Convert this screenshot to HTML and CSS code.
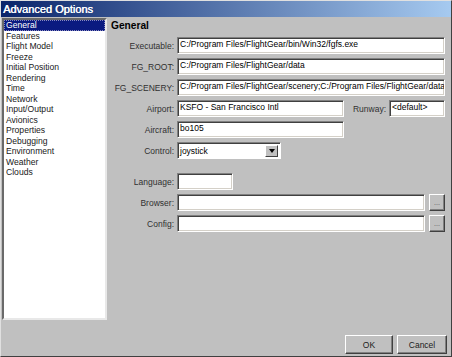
FILE: index.html
```html
<!DOCTYPE html>
<html lang="en">
<head>
    <meta charset="UTF-8">
    <title>Advanced Options</title>
    <link rel="stylesheet" href="styles.css">
</head>
<body>
    <div class="window">
        <div class="titlebar">Advanced Options</div>

        <div class="main">
            <!-- category list -->
            <ul class="pages">
                <li class="selected">General</li>
                <li>Features</li>
                <li>Flight Model</li>
                <li>Freeze</li>
                <li>Initial Position</li>
                <li>Rendering</li>
                <li>Time</li>
                <li>Network</li>
                <li>Input/Output</li>
                <li>Avionics</li>
                <li>Properties</li>
                <li>Debugging</li>
                <li>Environment</li>
                <li>Weather</li>
                <li>Clouds</li>
            </ul>

            <!-- General page -->
            <div class="panel">
                <h1>General</h1>
                <div class="form">
                    <div class="row">
                        <span class="label">Executable:</span>
                        <span class="field wide">C:/Program Files/FlightGear/bin/Win32/fgfs.exe</span>
                    </div>
                    <div class="row">
                        <span class="label">FG_ROOT:</span>
                        <span class="field wide">C:/Program Files/FlightGear/data</span>
                    </div>
                    <div class="row">
                        <span class="label">FG_SCENERY:</span>
                        <span class="field wide">C:/Program Files/FlightGear/scenery;C:/Program Files/FlightGear/data</span>
                    </div>
                    <div class="row">
                        <span class="label">Airport:</span>
                        <span class="field medium">KSFO - San Francisco Intl</span>
                        <span class="label runway">Runway:</span>
                        <span class="field small">&lt;default&gt;</span>
                    </div>
                    <div class="row">
                        <span class="label">Aircraft:</span>
                        <span class="field medium">bo105</span>
                    </div>
                    <div class="row">
                        <span class="label">Control:</span>
                        <span class="combo">
                            <span class="combo-text">joystick</span>
                            <span class="combo-btn"><span class="arrow"></span></span>
                        </span>
                    </div>

                    <div class="row spaced">
                        <span class="label">Language:</span>
                        <span class="field tiny"></span>
                    </div>
                    <div class="row">
                        <span class="label">Browser:</span>
                        <span class="field wide"></span>
                        <span class="button browse">...</span>
                    </div>
                    <div class="row">
                        <span class="label">Config:</span>
                        <span class="field wide"></span>
                        <span class="button browse">...</span>
                    </div>
                </div>
            </div>
        </div>

        <div class="footer">
            <span class="button ok">OK</span>
            <span class="button cancel">Cancel</span>
        </div>
    </div>
</body>
</html>
```

FILE: styles.css
```css
body {
    margin: 0;
    background: #c0c0c0;
    font-family: "Liberation Sans", Arial, sans-serif;
    font-size: 8.5px;
    color: #000;
}

.window {
    width: 452px;
    height: 357px;
    box-sizing: border-box;
    display: flex;
    flex-direction: column;
    background: #c0c0c0;
    border: 1px solid;
    border-color: #e0e0e0 #404040 #404040 #e0e0e0;
}

/* title bar */
.titlebar {
    height: 16px;
    line-height: 16px;
    padding-left: 2px;
    color: #fff;
    font-size: 11px;
    text-shadow: 0.4px 0 0 #fff;
    background: linear-gradient(to right, #0a246a, #a6caf0);
}

.main {
    flex: 1;
    display: flex;
    padding-top: 1px;
    padding-left: 1px;
    min-height: 0;
}

/* category list */
.pages {
    width: 105px;
    height: 302px;
    flex-shrink: 0;
    box-sizing: border-box;
    margin: 0;
    padding: 0;
    list-style: none;
    background: #fff;
    border: 2px solid;
    border-color: #6a6a6a #e8e8e8 #e8e8e8 #6a6a6a;
}

.pages li {
    height: 10.5px;
    line-height: 10.5px;
    padding-left: 2px;
    font-size: 8.6px;
    color: #202020;
}

.pages li.selected {
    background: #0a1a80;
    color: #fff;
    outline: 1px dotted #8a8ac0;
    outline-offset: -1px;
}

/* right panel */
.panel {
    flex: 1;
    min-width: 0;
    padding-top: 2px;
    padding-right: 6px;
}

.panel h1 {
    margin: 0 0 6px 4px;
    font-size: 10.2px;
    line-height: 11px;
    font-weight: bold;
}

.form {
    display: flex;
    flex-direction: column;
    gap: 4px;
}

.row {
    display: flex;
    align-items: center;
    gap: 3px;
    height: 17px;
}

.row.spaced {
    margin-top: 10px;
}

.label {
    width: 67px;
    flex-shrink: 0;
    text-align: right;
    color: #303030;
}

.label.runway {
    width: auto;
    margin-left: auto;
}

.field {
    height: 17px;
    box-sizing: border-box;
    line-height: 13px;
    padding-left: 2px;
    background: #fff;
    white-space: nowrap;
    overflow: hidden;
    border: 1px solid;
    border-color: #808080 #fff #fff #808080;
    box-shadow: inset 1px 1px 0 #404040, inset -1px -1px 0 #d4d0c8;
}

.field.wide { flex: 1; min-width: 0; }
.field.medium { width: 167px; flex-shrink: 0; }
.field.small { width: 56px; flex-shrink: 0; }
.field.tiny { width: 56px; flex-shrink: 0; }

/* combo box */
.combo {
    width: 104px;
    height: 17px;
    box-sizing: border-box;
    display: flex;
    background: #fff;
    border: 1px solid;
    border-color: #808080 #fff #fff #808080;
    box-shadow: inset 1px 1px 0 #404040;
    padding: 2px 2px 1px 2px;
}

.combo-text {
    flex: 1;
    line-height: 12px;
}

.combo-btn {
    width: 13px;
    box-sizing: border-box;
    display: flex;
    align-items: center;
    justify-content: center;
    background: #c0c0c0;
    border: 1px solid;
    border-color: #fff #404040 #404040 #fff;
}

.arrow {
    width: 0;
    height: 0;
    border-left: 3.5px solid transparent;
    border-right: 3.5px solid transparent;
    border-top: 4px solid #000;
}

/* buttons */
.button {
    box-sizing: border-box;
    display: flex;
    align-items: center;
    justify-content: center;
    background: #c0c0c0;
    color: #202020;
    border: 1px solid;
    border-color: #fff #404040 #404040 #fff;
    box-shadow: inset -1px -1px 0 #808080;
}

.button.browse {
    width: 16px;
    height: 17px;
    flex-shrink: 0;
    margin-left: 1px;
    font-size: 7px;
    color: #505050;
}

.footer {
    height: 36px;
    box-sizing: border-box;
    display: flex;
    justify-content: flex-end;
    align-items: flex-start;
    gap: 4px;
    padding: 15px 4px 0 0;
}

.button.ok {
    width: 48px;
    height: 19px;
}

.button.cancel {
    width: 50px;
    height: 19px;
}
```
